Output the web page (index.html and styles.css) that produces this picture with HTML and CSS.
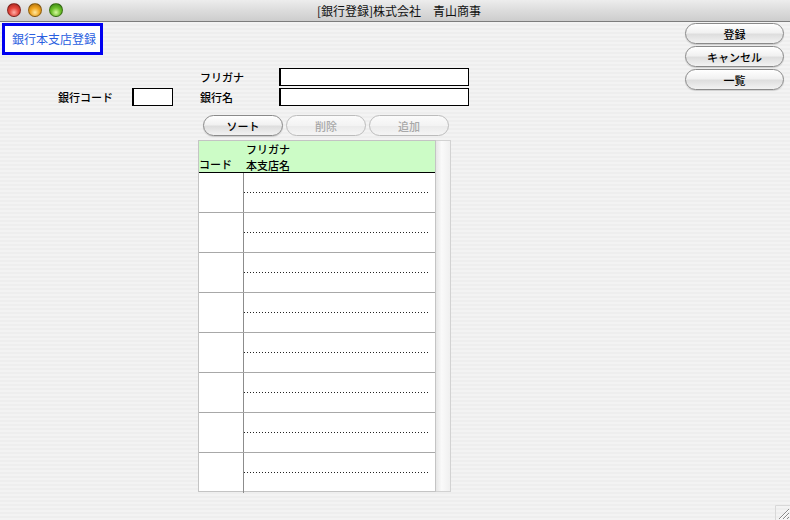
FILE: index.html
```html
<!DOCTYPE html>
<html lang="ja">
<head>
    <meta charset="UTF-8">
    <title>[銀行登録]株式会社　青山商事</title>
    <link rel="stylesheet" href="styles.css">
</head>
<body>
    <div class="window">
        <div class="titlebar">
            <div class="lights">
                <span class="light red"></span>
                <span class="light yellow"></span>
                <span class="light green"></span>
            </div>
            <div class="title">[銀行登録]株式会社　青山商事</div>
        </div>

        <div class="content">
            <div class="main">
                <div class="caption">銀行本支店登録</div>

                <div class="fields">
                    <div class="label kana-label">フリガナ</div>
                    <div class="input wide kana-input"></div>
                    <div class="label code-label">銀行コード</div>
                    <div class="input code-input"></div>
                    <div class="label name-label">銀行名</div>
                    <div class="input wide name-input"></div>
                </div>

                <div class="row-buttons">
                    <button class="btn">ソート</button>
                    <button class="btn disabled">削除</button>
                    <button class="btn disabled">追加</button>
                </div>

                <div class="list">
                    <div class="grid">
                        <div class="head">
                            <div class="head-code">コード</div>
                            <div class="head-name">フリガナ<br>本支店名</div>
                        </div>
                        <div class="body" id="rows"></div>
                    </div>
                    <div class="scrollbar"></div>
                </div>
            </div>

            <div class="side">
                <button class="btn side-btn">登録</button>
                <button class="btn side-btn">キャンセル</button>
                <button class="btn side-btn">一覧</button>
            </div>
        </div>

        <svg class="grip" width="15" height="15" viewBox="0 0 15 15">
            <path d="M0.5 15 V0.5 H15" fill="none" stroke="#d8d8d8"/>
            <path d="M14 4 L4 14 M14 8 L8 14 M14 12 L12 14" stroke="#8a8a8a" stroke-width="1"/>
            <path d="M14 5 L5 14 M14 9 L9 14" stroke="#ffffff" stroke-width="1"/>
        </svg>
    </div>

    <script>
        // 8 empty rows
        const rows = document.getElementById('rows');
        for (let i = 0; i < 8; i++) {
            const row = document.createElement('div');
            row.className = 'row';
            row.innerHTML = '<div class="cell-code"></div><div class="cell-name"><div class="kana"></div><div class="name"></div></div>';
            rows.appendChild(row);
        }
    </script>
</body>
</html>
```

FILE: styles.css
```css
* {
    box-sizing: border-box;
}

body {
    margin: 0;
    font-family: "Noto Sans CJK JP", "Liberation Sans", sans-serif;
    font-size: 11px;
    font-weight: 500;
    color: #000;
}

.window {
    position: relative;
    width: 790px;
    height: 520px;
    overflow: hidden;
    background: repeating-linear-gradient(to bottom, #eeeeee 0, #eeeeee 2px, #f3f3f3 2px, #f3f3f3 4px);
}

.titlebar {
    position: relative;
    height: 22px;
    background: linear-gradient(to bottom, #ededed 0%, #dcdcdc 50%, #cdcdcd 100%);
    border-bottom: 1px solid #7d7d7d;
    display: flex;
    align-items: center;
    justify-content: center;
}

.lights {
    position: absolute;
    left: 7px;
    top: 3px;
    display: flex;
    gap: 7px;
}

.light {
    width: 14px;
    height: 14px;
    border-radius: 50%;
    border: 1px solid rgba(0, 0, 0, 0.35);
}

.light.red {
    background: radial-gradient(circle at 50% 70%, #ffb0a8 0%, #e5463c 45%, #9c1d16 100%);
}

.light.yellow {
    background: radial-gradient(circle at 50% 70%, #ffe8a0 0%, #f0a520 45%, #a36608 100%);
}

.light.green {
    background: radial-gradient(circle at 50% 70%, #d8f8a0 0%, #6cc02a 45%, #2f7a0c 100%);
}

.title {
    font-size: 12px;
    font-weight: 400;
    color: #111;
    margin-left: 8px;
}

.content {
    display: flex;
}

.main {
    flex: 1;
}

.caption {
    margin: 1px 0 0 2px;
    width: 101px;
    height: 32px;
    border: 3px solid #0000f0;
    background: #fff;
    color: #2a5ee0;
    font-size: 12px;
    font-weight: 400;
    line-height: 26px;
    padding-left: 7px;
}

.fields {
    display: grid;
    grid-template-columns: 74px 41px 27px 79px 190px;
    grid-template-rows: 18px 18px;
    row-gap: 2px;
    margin: 13px 0 0 58px;
}

.label {
    line-height: 18px;
}

.kana-label { grid-column: 4; grid-row: 1; }
.kana-input { grid-column: 5; grid-row: 1; }
.code-label { grid-column: 1; grid-row: 2; }
.code-input { grid-column: 2; grid-row: 2; }
.name-label { grid-column: 4; grid-row: 2; }
.name-input { grid-column: 5; grid-row: 2; }

.input {
    background: #fff;
    border: 1px solid #000;
    border-left-width: 2px;
}

.row-buttons {
    display: flex;
    gap: 3px;
    margin: 9px 0 0 203px;
}

.btn {
    font-family: inherit;
    font-size: 11px;
    font-weight: 500;
    height: 21px;
    width: 80px;
    padding: 0;
    border: 1px solid #8a8a8a;
    border-radius: 11px;
    background: linear-gradient(to bottom, #ffffff 0%, #f1f1f1 45%, #dedede 55%, #f2f2f2 100%);
    color: #000;
    box-shadow: 0 1px 1px rgba(0, 0, 0, 0.15);
}

.btn.disabled {
    color: #a8a8a8;
    border-color: #bcbcbc;
    background: linear-gradient(to bottom, #fbfbfb 0%, #f3f3f3 50%, #ebebeb 55%, #f5f5f5 100%);
    box-shadow: none;
}

.list {
    display: flex;
    margin: 4px 0 0 198px;
    height: 352px;
}

.grid {
    width: 238px;
    border: 1px solid #c4c4c4;
    background: #fff;
}

.head {
    display: flex;
    height: 32px;
    background: #ccfcc6;
    border-bottom: 1px solid #000;
}

.head-code {
    width: 45px;
    align-self: flex-end;
    line-height: 14px;
    padding-bottom: 1px;
}

.head-name {
    line-height: 16px;
    padding: 0 0 0 2px;
}

.row {
    display: flex;
    height: 40px;
    border-bottom: 1px solid #a8a8a8;
}

.row:last-child {
    border-bottom: none;
}

.cell-code {
    width: 45px;
    border-right: 1px solid #8c8c8c;
}

.cell-name {
    flex: 1;
    padding-right: 5px;
}

.kana {
    height: 20px;
    background: linear-gradient(to right, #222 1px, transparent 1px) left bottom / 3px 1px repeat-x;
}

.scrollbar {
    width: 15px;
    background: linear-gradient(to right, #e6e6e6, #fafafa 40%, #f0f0f0);
    border: 1px solid #d2d2d2;
    border-left: none;
}

.side {
    width: 99px;
    margin: 1px 6px 0 0;
    display: flex;
    flex-direction: column;
    gap: 2px;
}

.side-btn {
    width: 99px;
}

.grip {
    position: absolute;
    right: 0;
    bottom: 0;
}
```
